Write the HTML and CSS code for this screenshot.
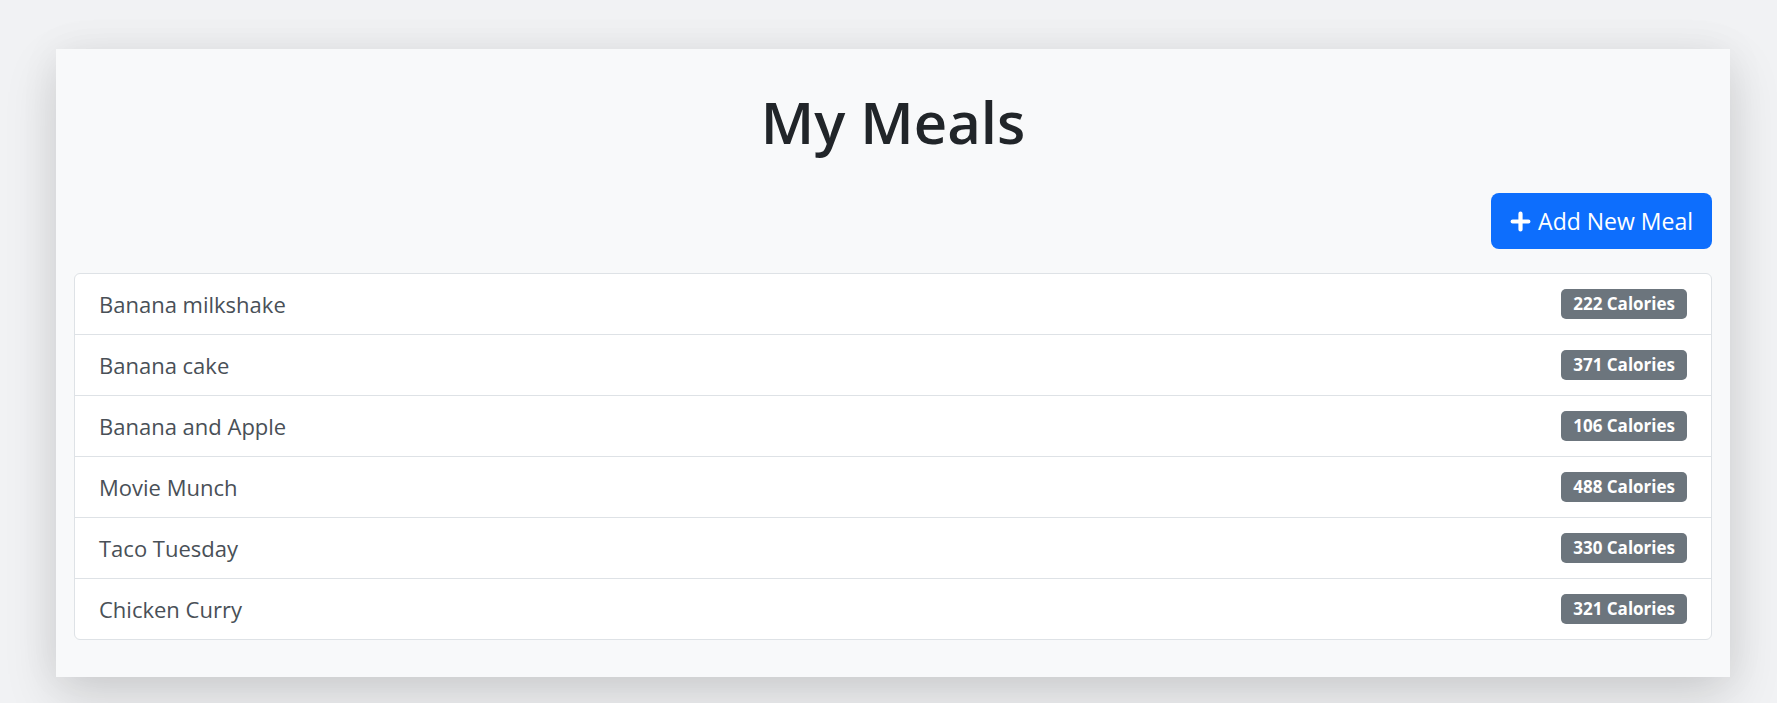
FILE: index.html
```html
<!DOCTYPE html>
<html lang="en">
<head>
<meta charset="utf-8">
<title>My Meals</title>
<link rel="stylesheet" href="styles.css">
</head>
<body>
<main class="card">
  <h1 class="title">My Meals</h1>
  <div class="toolbar">
    <button class="btn-add" type="button">
      <svg class="plus" viewBox="0 0 16 16" width="21" height="21" aria-hidden="true">
        <path d="M8 2v12M2 8h12" stroke="currentColor" stroke-width="3.2" stroke-linecap="round" fill="none"/>
      </svg>
      <span>Add New Meal</span>
    </button>
  </div>
  <ul class="meal-list">
    <li class="meal"><span class="meal-name">Banana milkshake</span><span class="badge">222 Calories</span></li>
    <li class="meal"><span class="meal-name">Banana cake</span><span class="badge">371 Calories</span></li>
    <li class="meal"><span class="meal-name">Banana and Apple</span><span class="badge">106 Calories</span></li>
    <li class="meal"><span class="meal-name">Movie Munch</span><span class="badge">488 Calories</span></li>
    <li class="meal"><span class="meal-name">Taco Tuesday</span><span class="badge">330 Calories</span></li>
    <li class="meal"><span class="meal-name">Chicken Curry</span><span class="badge">321 Calories</span></li>
  </ul>
</main>
</body>
</html>
```

FILE: styles.css
```css
* { box-sizing: border-box; }

html, body {
  margin: 0;
  padding: 0;
}

body {
  background: #f1f2f4;
  font-family: "Open Sans", "Noto Sans", sans-serif;
  color: #212529;
  overflow: hidden;
}

.card {
  display: block;
  margin: 49px 47px 27px 56px;
  padding: 0 18px 37px;
  background: #f8f9fa;
  box-shadow: 0 20px 50px rgba(0, 0, 0, 0.14), 0 0 40px rgba(0, 0, 0, 0.05);
}

.title {
  margin: 0;
  padding: 37px 0 35px;
  font-size: 58px;
  line-height: 72px;
  font-weight: 600;
  text-align: center;
  color: #212529;
}

.toolbar {
  display: flex;
  justify-content: flex-end;
  margin-bottom: 24px;
}

.btn-add {
  display: inline-flex;
  align-items: center;
  gap: 7px;
  height: 56px;
  padding: 0 19px 0 19px;
  border: 0;
  border-radius: 8px;
  background: #0d6efd;
  color: #ffffff;
  font-family: "Open Sans", "Noto Sans", sans-serif;
  font-size: 23px;
  font-weight: 400;
  cursor: pointer;
}

.plus {
  display: block;
  flex: none;
}

.meal-list {
  list-style: none;
  margin: 0;
  padding: 0;
  background: #ffffff;
  border: 1px solid #dee2e6;
  border-radius: 6px;
}

.meal {
  display: flex;
  align-items: center;
  justify-content: space-between;
  height: 61px;
  padding: 0 24px;
  border-bottom: 1px solid #dee2e6;
}

.meal:last-child {
  height: 60px;
  border-bottom: 0;
}

.meal-name {
  font-size: 22px;
  color: #495057;
}

.badge {
  display: inline-block;
  padding: 0 12px;
  height: 30px;
  line-height: 30px;
  border-radius: 5px;
  background: #6c757d;
  color: #ffffff;
  font-size: 17px;
  font-weight: 700;
}
```
